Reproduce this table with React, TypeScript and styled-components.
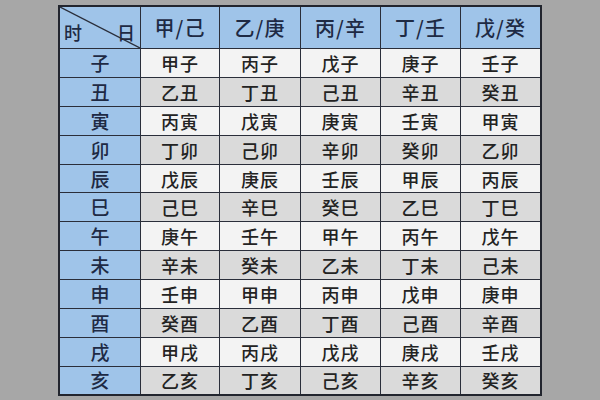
import React from 'react';
import styled, { createGlobalStyle } from 'styled-components';

const GlobalStyle = createGlobalStyle`
  html, body {
    margin: 0;
    padding: 0;
    background: #a7a7a7;
    font-family: "Noto Sans CJK SC", "Noto Sans", sans-serif;
  }
`;

const Page = styled.div`
  width: 600px;
  height: 400px;
  padding-top: 5px;
  box-sizing: border-box;
  display: flex;
  justify-content: center;
  align-items: flex-start;
`;

const Table = styled.table`
  border-collapse: collapse;
  table-layout: fixed;
  width: 476px;
  border: 2px solid #22252e;
`;

const HeadCell = styled.th<{ $w: number }>`
  width: ${(p) => p.$w}px;
  height: 41px;
  padding: 0;
  background: #9fc4e9;
  border: 1.5px solid #2a2e3a;
  color: #1e2a44;
  font-size: 20px;
  font-weight: 500;
  text-align: center;
  letter-spacing: 1px;
`;

const CornerCell = styled(HeadCell)`
  position: relative;
`;

const CornerInner = styled.div`
  display: flex;
  justify-content: space-between;
  align-items: center;
  padding: 8px 4px 0 4px;
  font-size: 18px;
`;

const Diagonal = styled.svg`
  position: absolute;
  left: 0;
  top: 0;
  width: 100%;
  height: 100%;
`;

const Row = styled.tr<{ $alt: boolean }>`
  height: 28.9px;
  background: ${(p) => (p.$alt ? '#dadada' : '#f3f3f3')};
`;

const Branch = styled.td`
  padding: 0;
  background: #9fc4e9;
  border: 1.5px solid #2a2e3a;
  color: #1e2a44;
  font-size: 19px;
  font-weight: 500;
  text-align: center;
  line-height: 26px;
`;

const Cell = styled.td`
  padding: 0;
  border: 1.5px solid #2a2e3a;
  color: #232323;
  font-size: 18px;
  font-weight: 500;
  text-align: center;
  line-height: 26px;
  letter-spacing: 1px;
`;

const heads = ['甲/己', '乙/庚', '丙/辛', '丁/壬', '戊/癸'];
const widths = [80, 78, 80, 79, 79, 79];

const rows: [string, string[]][] = [
  ['子', ['甲子', '丙子', '戊子', '庚子', '壬子']],
  ['丑', ['乙丑', '丁丑', '己丑', '辛丑', '癸丑']],
  ['寅', ['丙寅', '戊寅', '庚寅', '壬寅', '甲寅']],
  ['卯', ['丁卯', '己卯', '辛卯', '癸卯', '乙卯']],
  ['辰', ['戊辰', '庚辰', '壬辰', '甲辰', '丙辰']],
  ['巳', ['己巳', '辛巳', '癸巳', '乙巳', '丁巳']],
  ['午', ['庚午', '壬午', '甲午', '丙午', '戊午']],
  ['未', ['辛未', '癸未', '乙未', '丁未', '己未']],
  ['申', ['壬申', '甲申', '丙申', '戊申', '庚申']],
  ['酉', ['癸酉', '乙酉', '丁酉', '己酉', '辛酉']],
  ['戌', ['甲戌', '丙戌', '戊戌', '庚戌', '壬戌']],
  ['亥', ['乙亥', '丁亥', '己亥', '辛亥', '癸亥']],
];

export default function App() {
  return (
    <>
      <GlobalStyle />
      <Page>
        <Table>
          <thead>
            <tr>
              <CornerCell $w={widths[0]}>
                <Diagonal viewBox="0 0 100 100" preserveAspectRatio="none">
                  <line x1="0" y1="0" x2="100" y2="100" stroke="#2a2e3a" strokeWidth="1.3" vectorEffect="non-scaling-stroke" />
                </Diagonal>
                <CornerInner>
                  <span>时</span>
                  <span>日</span>
                </CornerInner>
              </CornerCell>
              {heads.map((h, i) => (
                <HeadCell key={h} $w={widths[i + 1]}>
                  {h}
                </HeadCell>
              ))}
            </tr>
          </thead>
          <tbody>
            {rows.map(([b, cells], i) => (
              <Row key={b} $alt={i % 2 === 1}>
                <Branch>{b}</Branch>
                {cells.map((c) => (
                  <Cell key={c}>{c}</Cell>
                ))}
              </Row>
            ))}
          </tbody>
        </Table>
      </Page>
    </>
  );
}
